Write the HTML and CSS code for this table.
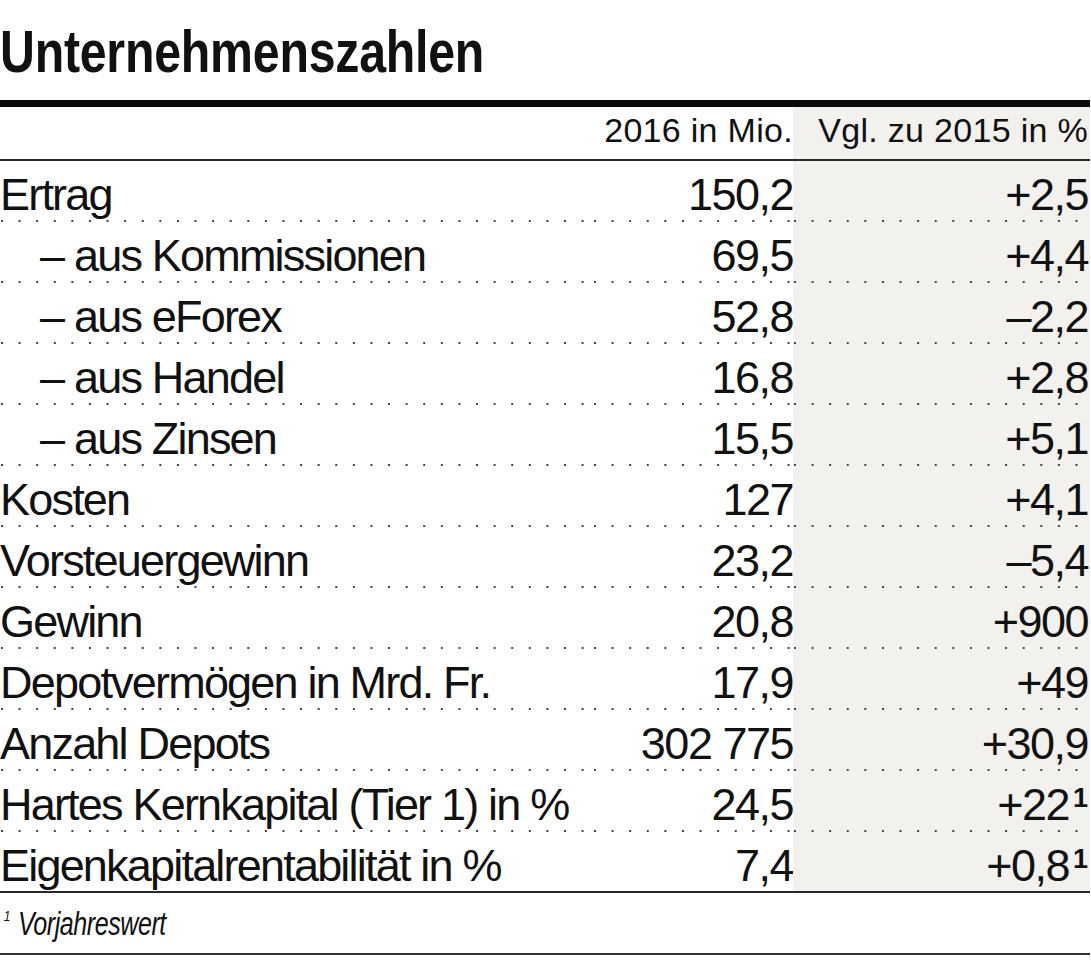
FILE: index.html
```html
<!DOCTYPE html>
<html lang="de">
<head>
<meta charset="utf-8">
<title>Unternehmenszahlen</title>
<link rel="stylesheet" href="styles.css">
</head>
<body>
<div class="page">
  <h1 class="title"><span class="title-text">Unternehmenszahlen</span></h1>
  <div class="rule"></div>
  <div class="table">
    <div class="row head">
      <div class="c label"></div>
      <div class="c num">2016 in Mio.</div>
      <div class="c chg">Vgl. zu 2015 in %</div>
    </div>
    <div class="row">
      <div class="c label">Ertrag</div>
      <div class="c num">150,2</div>
      <div class="c chg">+2,5</div>
    </div>
    <div class="row">
      <div class="c label sub">– aus Kommissionen</div>
      <div class="c num">69,5</div>
      <div class="c chg">+4,4</div>
    </div>
    <div class="row">
      <div class="c label sub">– aus eForex</div>
      <div class="c num">52,8</div>
      <div class="c chg">–2,2</div>
    </div>
    <div class="row">
      <div class="c label sub">– aus Handel</div>
      <div class="c num">16,8</div>
      <div class="c chg">+2,8</div>
    </div>
    <div class="row">
      <div class="c label sub">– aus Zinsen</div>
      <div class="c num">15,5</div>
      <div class="c chg">+5,1</div>
    </div>
    <div class="row">
      <div class="c label">Kosten</div>
      <div class="c num">127</div>
      <div class="c chg">+4,1</div>
    </div>
    <div class="row">
      <div class="c label">Vorsteuergewinn</div>
      <div class="c num">23,2</div>
      <div class="c chg">–5,4</div>
    </div>
    <div class="row">
      <div class="c label">Gewinn</div>
      <div class="c num">20,8</div>
      <div class="c chg">+900</div>
    </div>
    <div class="row">
      <div class="c label">Depotvermögen in Mrd. Fr.</div>
      <div class="c num">17,9</div>
      <div class="c chg">+49</div>
    </div>
    <div class="row">
      <div class="c label">Anzahl Depots</div>
      <div class="c num">302 775</div>
      <div class="c chg">+30,9</div>
    </div>
    <div class="row">
      <div class="c label">Hartes Kernkapital (Tier 1) in %</div>
      <div class="c num">24,5</div>
      <div class="c chg">+22<span class="fn">1</span></div>
    </div>
    <div class="row last">
      <div class="c label">Eigenkapitalrentabilität in %</div>
      <div class="c num">7,4</div>
      <div class="c chg">+0,8<span class="fn">1</span></div>
    </div>
  </div>
  <div class="foot"><span class="foot-mark">1</span><span class="foot-text">Vorjahreswert</span></div>
</div>
</body>
</html>
```

FILE: styles.css
```css
html, body {
  margin: 0;
  padding: 0;
  background: #ffffff;
}

.page {
  width: 1090px;
  color: #111111;
  font-family: "Liberation Sans", Arial, sans-serif;
}

.title {
  margin: 0;
  padding-top: 22px;
  height: 100px;
  box-sizing: border-box;
  font-weight: 700;
  font-size: 60px;
  line-height: 59px;
  white-space: nowrap;
}

.title-text {
  display: inline-block;
  transform: scaleX(0.805);
  transform-origin: 0 50%;
  letter-spacing: -0.3px;
}

.rule {
  height: 7px;
  background: #0a0a0a;
}

.table {
  display: flex;
  flex-direction: column;
}

.row {
  display: grid;
  grid-template-columns: 1fr 200px 297px;
  height: 61px;
}

.c {
  box-sizing: border-box;
  padding-top: 11px;
  font-size: 45px;
  line-height: 45px;
  letter-spacing: -1.5px;
  white-space: nowrap;
  background-image: linear-gradient(90deg, #444444 0 2px, transparent 2px);
  background-size: 17.6px 2px;
  background-repeat: repeat-x;
  background-position: 1px 100%;
}

.label {
  letter-spacing: -1.8px;
}

.label.sub {
  padding-left: 40px;
}

.num {
  text-align: right;
}

.chg {
  text-align: right;
  padding-right: 2px;
  background-color: #f2f1ed;
}

.head {
  height: 54px;
}

.head .c {
  font-size: 34px;
  line-height: 34px;
  letter-spacing: 0.3px;
  padding-top: 6px;
  background-image: none;
  border-bottom: 2px solid #2a2a2a;
}

.last .c {
  background-image: none;
  border-bottom: 2px solid #2a2a2a;
}

.fn {
  font-size: 27px;
  line-height: 0;
  font-weight: 700;
  letter-spacing: 0;
  margin-left: 4px;
  vertical-align: 13px;
}

.foot {
  height: 62px;
  box-sizing: border-box;
  padding-top: 14px;
  border-bottom: 2px solid #333333;
  font-style: italic;
  font-size: 33px;
  line-height: 33px;
  white-space: nowrap;
}

.foot-mark {
  display: inline-block;
  font-size: 15px;
  line-height: 0;
  vertical-align: 14px;
  margin-left: 3px;
  margin-right: 7px;
  transform: scaleX(0.8);
}

.foot-text {
  display: inline-block;
  letter-spacing: -0.6px;
  transform: scaleX(0.76);
  transform-origin: 0 50%;
}
```
